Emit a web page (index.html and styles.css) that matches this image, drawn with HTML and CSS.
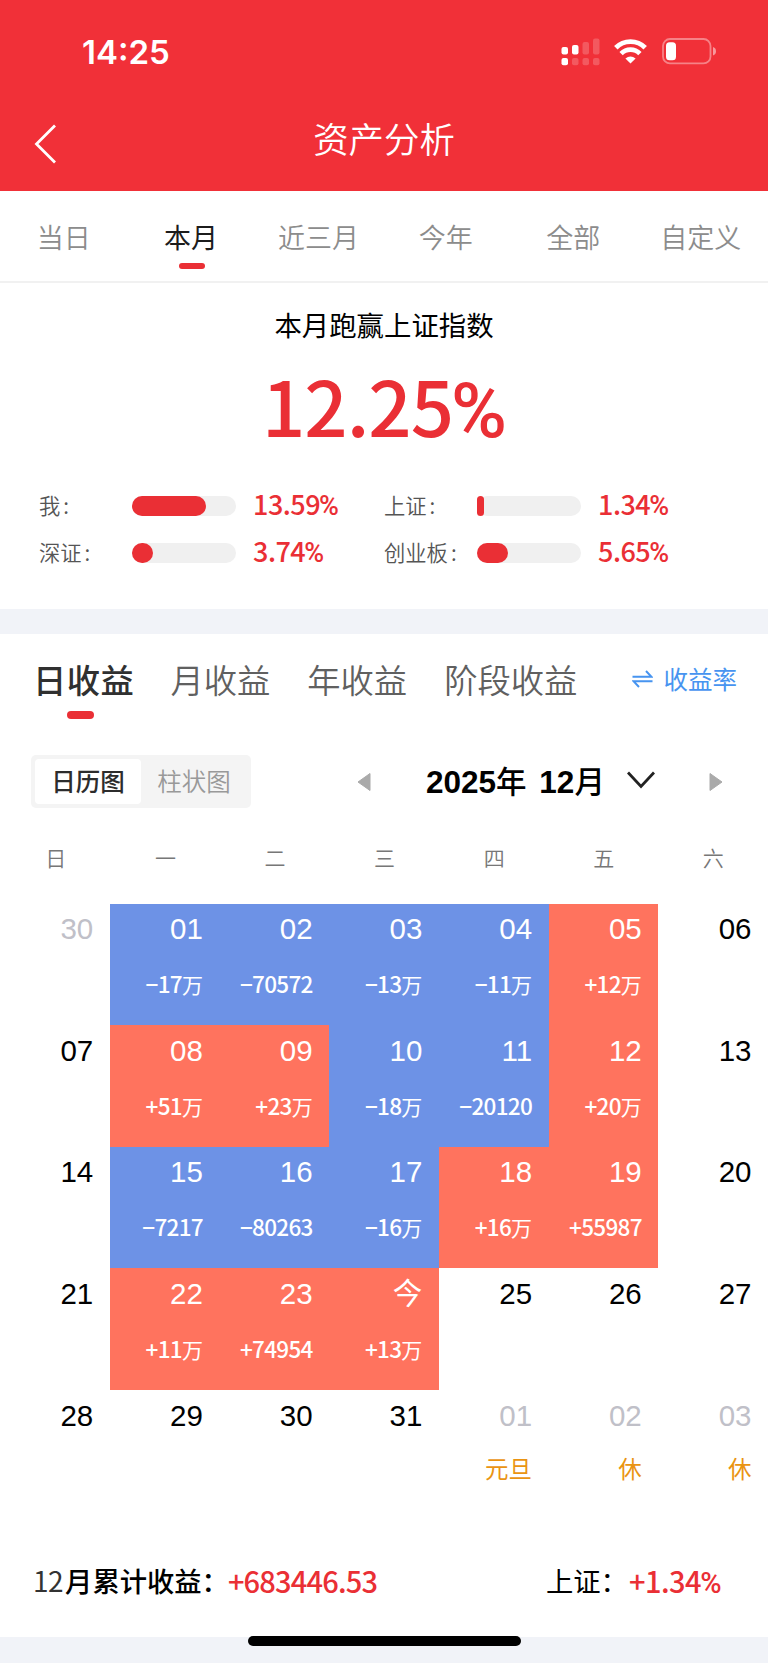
FILE: index.html
```
<!DOCTYPE html>
<html lang="zh-CN">
<head>
    <meta charset="UTF-8">
    <meta name="viewport" content="width=device-width, initial-scale=1.0">
    <title>资产分析</title>
    <link rel="stylesheet" href="styles.css">
</head>
<body>

<header>
    <!-- Status bar -->
    <div class="status-bar">
        <span class="time">14:25</span>
        <div class="status-icons">
            <svg class="signal" width="39" height="28" viewBox="0 0 39 28" fill="#fff">
                <rect x="0.5" y="9" width="6.5" height="7.5" rx="2"/>
                <rect x="11" y="7" width="6.5" height="9.5" rx="2"/>
                <rect x="21.5" y="4" width="6.5" height="12.5" rx="2" opacity="0.2"/>
                <rect x="32" y="0.5" width="6.5" height="16" rx="2" opacity="0.2"/>
                <rect x="0.5" y="20" width="6.5" height="7.2" rx="2"/>
                <rect x="11" y="20" width="6.5" height="7.2" rx="2" opacity="0.2"/>
                <rect x="21.5" y="20" width="6.5" height="7.2" rx="2" opacity="0.2"/>
                <rect x="32" y="20" width="6.5" height="7.2" rx="2" opacity="0.2"/>
            </svg>
            <svg class="wifi" width="33" height="25" viewBox="0 0 33 25">
                <path d="M1.800 8.800 A20.600 20.600 0 0 1 31.200 8.800" fill="none" stroke="#fff" stroke-width="4.800"/>
                <path d="M7.100 14.600 A13 13 0 0 1 25.900 14.600" fill="none" stroke="#fff" stroke-width="4.600"/>
                <path d="M11.400 19.400 Q16.500 15.400 21.600 19.400 L16.500 24.600 Z" fill="#fff"/>
            </svg>
            <svg class="battery" width="55" height="27" viewBox="0 0 55 27">
                <rect x="1" y="1" width="47.500" height="24.400" rx="7" fill="none" stroke="#fff" stroke-opacity="0.4" stroke-width="1.800"/>
                <rect x="4" y="4.300" width="10" height="18" rx="3.500" fill="#fff"/>
                <path d="M51 9 Q54 10 54 13.200 Q54 16.400 51 17.400 Z" fill="#fff" opacity="0.5"/>
            </svg>
        </div>
    </div>
    <!-- Title bar -->
    <div class="nav-bar">
        <svg class="back" width="24" height="40" viewBox="0 0 24 40">
            <path d="M21 1.500 L2.500 20 L21 38.500" fill="none" stroke="#fff" stroke-width="2.800"/>
        </svg>
        <h1>资产分析</h1>
    </div>
</header>

<nav class="range-tabs">
    <a>当日</a>
    <a class="active">本月</a>
    <a>近三月</a>
    <a>今年</a>
    <a>全部</a>
    <a>自定义</a>
</nav>

<!-- Comparison with the indexes -->
<section class="summary">
    <h2>本月跑赢上证指数</h2>
    <div class="big-number">12.25<i>%</i></div>
    <div class="index-list">
        <div class="index-item">
            <span class="index-name">我<i>:</i></span>
            <div class="bar"><div class="bar-fill" style="width: 71%"></div></div>
            <span class="index-value">13.59<i>%</i></span>
        </div>
        <div class="index-item">
            <span class="index-name">上证<i>:</i></span>
            <div class="bar"><div class="bar-fill" style="width: 7.2%"></div></div>
            <span class="index-value">1.34<i>%</i></span>
        </div>
        <div class="index-item">
            <span class="index-name">深证<i>:</i></span>
            <div class="bar"><div class="bar-fill" style="width: 20%"></div></div>
            <span class="index-value">3.74<i>%</i></span>
        </div>
        <div class="index-item">
            <span class="index-name">创业板<i>:</i></span>
            <div class="bar"><div class="bar-fill" style="width: 30%"></div></div>
            <span class="index-value">5.65<i>%</i></span>
        </div>
    </div>
</section>

<section class="profit">
    <div class="profit-tabs">
        <a class="active">日收益</a>
        <a>月收益</a>
        <a>年收益</a>
        <a>阶段收益</a>
        <div class="rate-link">
            <svg width="21" height="18" viewBox="0 0 21 18" fill="none" stroke="#4794f0" stroke-width="2">
                <path d="M0.500 6.800 H19.500 L14 1"/>
                <path d="M20.500 11.200 H1.500 L7 17"/>
            </svg>
            <span>收益率</span>
        </div>
    </div>

    <div class="toolbar">
        <div class="switch">
            <span class="on">日历图</span>
            <span>柱状图</span>
        </div>
        <svg class="prev" width="14" height="20" viewBox="0 0 14 20"><path d="M13 1.500 V18.500 L1 10 Z" fill="#aaa" stroke="#aaa" stroke-linejoin="round"/></svg>
        <div class="month">2025<b>年</b> 12<b>月</b></div>
        <svg class="down" width="28" height="18" viewBox="0 0 28 18"><path d="M1 1.500 L14 15.500 L27 1.500" fill="none" stroke="#222" stroke-width="2.800"/></svg>
        <svg class="next" width="14" height="20" viewBox="0 0 14 20"><path d="M1 1.500 V18.500 L13 10 Z" fill="#aaa" stroke="#aaa" stroke-linejoin="round"/></svg>
    </div>

    <div class="weekdays">
        <span>日</span><span>一</span><span>二</span><span>三</span><span>四</span><span>五</span><span>六</span>
    </div>

    <!-- Calendar: loss = blue, gain = red -->
    <div class="calendar">
        <div class="day other">30</div>
        <div class="day loss">01<p>−17<b>万</b></p></div>
        <div class="day loss">02<p>−70572</p></div>
        <div class="day loss">03<p>−13<b>万</b></p></div>
        <div class="day loss">04<p>−11<b>万</b></p></div>
        <div class="day gain">05<p>+12<b>万</b></p></div>
        <div class="day">06</div>

        <div class="day">07</div>
        <div class="day gain">08<p>+51<b>万</b></p></div>
        <div class="day gain">09<p>+23<b>万</b></p></div>
        <div class="day loss">10<p>−18<b>万</b></p></div>
        <div class="day loss">11<p>−20120</p></div>
        <div class="day gain">12<p>+20<b>万</b></p></div>
        <div class="day">13</div>

        <div class="day">14</div>
        <div class="day loss">15<p>−7217</p></div>
        <div class="day loss">16<p>−80263</p></div>
        <div class="day loss">17<p>−16<b>万</b></p></div>
        <div class="day gain">18<p>+16<b>万</b></p></div>
        <div class="day gain">19<p>+55987</p></div>
        <div class="day">20</div>

        <div class="day">21</div>
        <div class="day gain">22<p>+11<b>万</b></p></div>
        <div class="day gain">23<p>+74954</p></div>
        <div class="day gain">今<p>+13<b>万</b></p></div>
        <div class="day">25</div>
        <div class="day">26</div>
        <div class="day">27</div>

        <div class="day">28</div>
        <div class="day">29</div>
        <div class="day">30</div>
        <div class="day">31</div>
        <div class="day other">01<p class="holiday">元旦</p></div>
        <div class="day other">02<p class="holiday">休</p></div>
        <div class="day other">03<p class="holiday">休</p></div>
    </div>

    <div class="total">
        <span class="total-month">12</span>
        <span class="total-name">月累计收益：</span>
        <span class="total-value">+683446.53</span>
        <span class="total-index">上证：</span>
        <span class="total-value">+1.34<i>%</i></span>
    </div>
</section>

<footer>
    <div class="home-indicator"></div>
</footer>

</body>
</html>
```
FILE: styles.css
```
* {
    box-sizing: border-box;
}
body {
    font-family: "Noto Sans CJK SC", sans-serif;
    background-color: #f1f3f8;
    margin: 0;
    padding: 0;
    width: 768px;
    height: 1663px;
    overflow: hidden;
}
h1, h2, p {
    margin: 0;
    font-weight: normal;
}
i {
    font-style: normal;
}
svg {
    display: block;
    flex: none;
}
header {
    height: 190.5px;
    background-color: #f13038;
    color: white;
}
.status-bar {
    height: 96px;
    padding: 7px 51px 0 82px;
    display: flex;
    align-items: center;
    justify-content: space-between;
}
.time {
    font-family: Inter, sans-serif;
    font-size: 33px;
    font-weight: 600;
}
.status-icons {
    display: flex;
    align-items: center;
}
.wifi {
    margin-left: 14px;
}
.battery {
    margin-left: 15px;
}
.nav-bar {
    display: grid;
    grid-template-columns: 100px 1fr 100px;
    align-items: center;
    height: 94px;
}
.back {
    margin: 1px 0 0 34px;
}
h1 {
    font-size: 35.400px;
    font-weight: 350;
    line-height: 50px;
    text-align: center;
    margin-top: -11px;
}

/* Range tabs */
.range-tabs {
    display: grid;
    grid-template-columns: repeat(6, 127.4px);
    height: 92px;
    background-color: white;
    border-bottom: 2px solid #f1f1f1;
    font-size: 27px;
    font-weight: 350;
    line-height: 40px;
    text-align: center;
    color: #8c8c8c;
}
.range-tabs a {
    padding-top: 26px;
}
.range-tabs .active {
    color: #1c1c1c;
    font-weight: 400;
}
.active::after {
    content: "";
    display: block;
    width: 26px;
    height: 6px;
    margin: 6px auto 0;
    border-radius: 3px;
    background-color: #ea2f35;
}
.range-tabs .active::after {
    margin-left: 52px;
}

/* Summary */
.summary {
    height: 326.500px;
    background-color: white;
    padding-top: 21px;
}
h2 {
    font-size: 27.400px;
    line-height: 40px;
    text-align: center;
}
.big-number {
    margin-top: 16px;
    height: 88px;
    font-size: 76px;
    font-weight: 500;
    line-height: 88px;
    letter-spacing: -1px;
    text-align: center;
    color: #ea2f35;
}
.big-number i {
    font-family: Roboto, sans-serif;
    margin-left: -2px;
}
.index-list {
    display: grid;
    grid-template-columns: 345px 345px;
    grid-auto-rows: 47px;
    margin: 35px 0 0 39px;
}
.index-item {
    display: grid;
    grid-template-columns: 93px 104px 1fr;
    align-items: center;
}
.index-name {
    margin-top: -3px;
    font-size: 21.300px;
    font-weight: 350;
    color: #555;
}
.index-name i {
    margin-left: 3px;
}
.bar {
    height: 20px;
    border-radius: 10px;
    background-color: #f0f0f0;
}
.bar-fill {
    height: 20px;
    border-radius: 10px;
    background-color: #ea2f35;
}
.index-value {
    margin-top: -2px;
    padding-left: 17px;
    font-size: 27px;
    font-weight: 500;
    line-height: 40px;
    letter-spacing: -0.500px;
    color: #ea2f35;
}
.index-value i, .total-value i {
    font-family: Roboto, sans-serif;
    margin-left: -1px;
}

/* Profit */
.profit {
    margin-top: 25px;
    height: 1003px;
    background-color: white;
}
.profit-tabs {
    display: flex;
    height: 121px;
    padding: 20px 31px 0 33px;
    font-size: 33.300px;
    font-weight: 350;
    line-height: 50px;
    color: #606060;
}
.profit-tabs a {
    margin-right: 37px;
}
.profit-tabs .active {
    color: #303030;
    font-weight: 500;
    letter-spacing: 0.500px;
    margin-right: 36px;
}
.profit-tabs .active::after {
    width: 27px;
    height: 8px;
    margin: 7px 0 0 34px;
    border-radius: 4px;
}
.rate-link {
    display: flex;
    align-items: center;
    height: 50px;
    margin-left: auto;
    gap: 11px;
    font-size: 24.500px;
    font-weight: 400;
    color: #4794f0;
}
.toolbar {
    display: flex;
    align-items: center;
    height: 53px;
    padding-left: 31px;
}
.switch {
    display: flex;
    width: 220px;
    height: 53px;
    padding: 4px;
    border-radius: 5px;
    background-color: #f4f4f4;
    font-size: 24.500px;
    font-weight: 350;
    line-height: 44px;
    text-align: center;
    color: #999;
}
.switch span {
    width: 107px;
    height: 45px;
}
.switch .on {
    background-color: white;
    border-radius: 4px;
    color: #2c2c2c;
    font-weight: 500;
}
.prev {
    margin-left: 106px;
}
.month {
    width: 201px;
    margin: -4px 0 0 55px;
    font-family: "Liberation Sans", "Noto Sans CJK SC", sans-serif;
    font-size: 31.500px;
    font-weight: bold;
    word-spacing: 4px;
    white-space: nowrap;
}
.month b {
    font-size: 30.500px;
    font-weight: 500;
}
.down {
    margin-top: -4px;
}
.next {
    margin-left: 54px;
}
.weekdays {
    display: grid;
    grid-template-columns: repeat(7, 109.600px);
    height: 95.500px;
    padding-left: 1px;
    font-size: 21px;
    font-weight: 350;
    line-height: 98px;
    text-align: center;
    color: #777;
}
.calendar {
    display: grid;
    grid-template-columns: repeat(7, 1fr);
    grid-auto-rows: 121.600px;
}
.day {
    padding: 8.800px 16.500px 0 0;
    font-family: "Liberation Sans", "Noto Sans CJK SC", sans-serif;
    font-size: 29.500px;
    line-height: 34px;
    text-align: right;
    color: #000;
}
.day p {
    margin-top: 21px;
    font-family: "Noto Sans CJK SC", sans-serif;
    font-size: 22.500px;
    font-weight: 500;
    line-height: 32px;
    letter-spacing: -0.700px;
    white-space: nowrap;
}
.day b {
    font-size: 21px;
    font-weight: 400;
    letter-spacing: 0;
}
.loss {
    background-color: #6d92e6;
    color: white;
}
.gain {
    background-color: #ff735e;
    color: white;
}
.other {
    color: #c0c0c8;
}
.day .holiday {
    margin-top: 19.500px;
    font-size: 23.500px;
    font-weight: 400;
    letter-spacing: 0;
    color: #ea9412;
}
.total {
    display: flex;
    align-items: center;
    height: 50px;
    margin-top: 44px;
    padding: 0 47px 0 33px;
    font-size: 27.300px;
}
.total-month {
    font-size: 28px;
    letter-spacing: -0.500px;
    color: #333;
}
.total-name {
    margin-left: 2px;
    font-weight: 500;
}
.total-value {
    margin-left: -1px;
    font-size: 29px;
    font-weight: 500;
    letter-spacing: -0.800px;
    color: #ea2f35;
}
.total-index {
    margin-left: auto;
}
.total-index + .total-value {
    margin-left: 1px;
    letter-spacing: -0.500px;
}
.home-indicator {
    position: absolute;
    left: 248px;
    top: 1636px;
    width: 273px;
    height: 10px;
    border-radius: 5px;
    background-color: black;
}
```
